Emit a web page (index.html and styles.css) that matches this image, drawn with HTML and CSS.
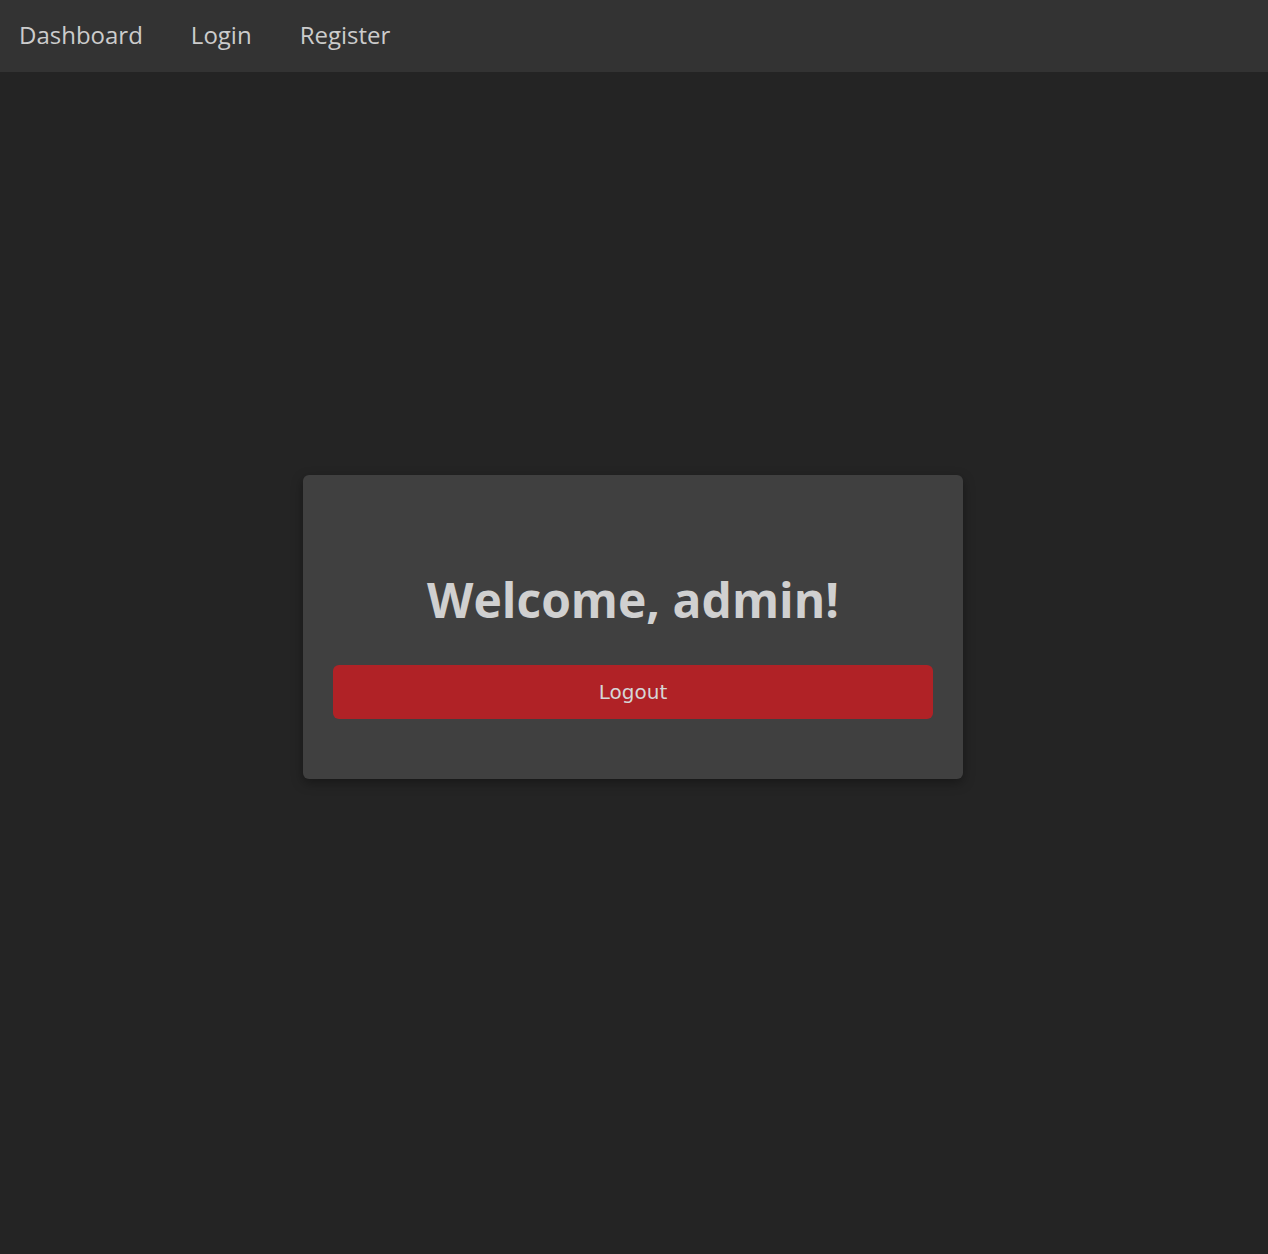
FILE: index.html
```html
<!DOCTYPE html>
<html lang="en">
<head>
<meta charset="utf-8">
<title>Dashboard</title>
<link rel="stylesheet" href="styles.css">
</head>
<body>
<nav class="topnav">
  <a class="nav-link" href="#">Dashboard</a>
  <a class="nav-link" href="#">Login</a>
  <a class="nav-link" href="#">Register</a>
</nav>
<main class="page">
  <section class="card">
    <h1 class="welcome">Welcome, admin!</h1>
    <button class="logout" type="button">Logout</button>
  </section>
</main>
</body>
</html>
```
FILE: styles.css
```css
html, body {
  margin: 0;
  padding: 0;
}
body {
  background: #242424;
  color: #cfcfcf;
  font-family: "Open Sans", "DejaVu Sans", sans-serif;
}
.topnav {
  position: fixed;
  top: 0;
  left: 0;
  right: 0;
  height: 72px;
  background: #333333;
  display: flex;
  align-items: center;
  gap: 48px;
  padding: 0 19px 4px;
  box-sizing: border-box;
}
.nav-link {
  color: #cccccc;
  text-decoration: none;
  font-size: 24px;
}
.page {
  min-height: 100vh;
  display: flex;
  align-items: center;
  justify-content: center;
  padding: 0 2px 0 0;
  box-sizing: border-box;
}
.card {
  width: 660px;
  box-sizing: border-box;
  background: #404040;
  border-radius: 6px;
  padding: 60px 30px;
  box-shadow: 0 4px 12px rgba(0, 0, 0, 0.35);
  text-align: center;
}
.welcome {
  font-size: 48px;
  font-weight: 700;
  margin: 32px 0 33px;
  color: #d0d0d0;
}
.logout {
  display: block;
  width: 100%;
  background: #b02226;
  color: #d6d6d6;
  border: none;
  border-radius: 6px;
  padding: 15px 0;
  font-family: "DejaVu Sans", sans-serif;
  font-size: 20px;
  cursor: pointer;
}
```
